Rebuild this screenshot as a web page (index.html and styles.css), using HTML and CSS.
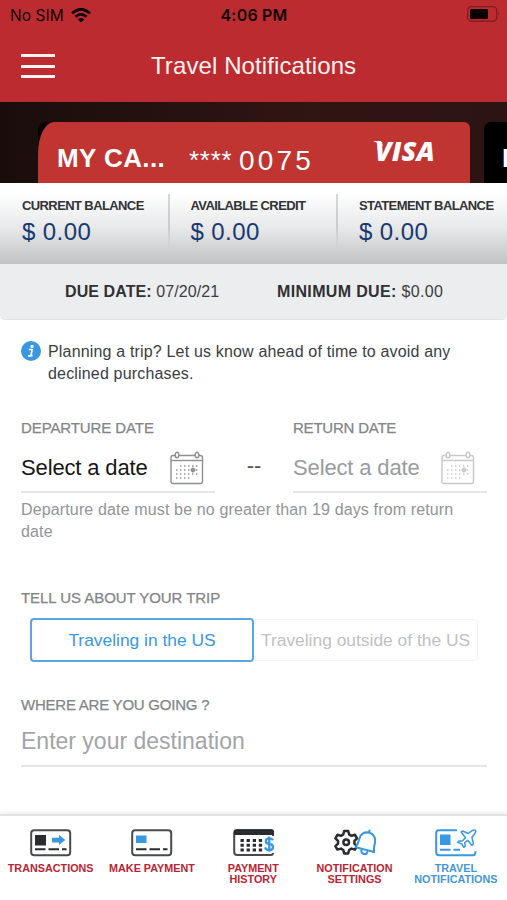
FILE: index.html
```html
<!DOCTYPE html>
<html lang="en">
<head>
<meta charset="utf-8">
<meta name="viewport" content="width=device-width, initial-scale=1">
<title>Travel Notifications</title>
<link rel="stylesheet" href="styles.css">
</head>
<body>
<svg class="defs" aria-hidden="true">
  <symbol id="calendar" viewBox="0 0 34 34">
    <g fill="none" stroke="currentColor" stroke-width="1.4">
      <rect x="1" y="4.5" width="31.5" height="28" rx="2"/>
      <path d="M1 9.5h31.5"/>
      <ellipse cx="7" cy="4" rx="1.8" ry="2.8" fill="#fff"/>
      <ellipse cx="27" cy="4" rx="1.8" ry="2.8" fill="#fff"/>
      <path d="M10 15h19M6 19h23M6 23h23M6 27h15" stroke-dasharray="1.4 2.6"/>
      <circle cx="23" cy="19" r="1.5"/>
      <path d="M23 16v6M20 19h6" stroke-width=".7"/>
    </g>
  </symbol>
</svg>
<div class="screen">
  <header class="header">
    <div class="status">
      <div class="carrier"><span>No SIM</span>
        <svg width="20" height="15" viewBox="0 0 20 15" fill="none" stroke="#120506" stroke-width="2.8"><path d="M1 5.2Q10-2.7 19 5.2M4.4 8.8q5.6-4.8 11.2 0"/><path d="M10 14.6l-3.2-3.2q3.2-2.7 6.4 0z" fill="#120506" stroke="none"/></svg>
      </div>
      <span class="time">4:06 PM</span>
      <svg class="battery" width="33" height="16" viewBox="0 0 33 16"><rect x=".7" y=".7" width="29" height="14.4" rx="3.5" fill="none" stroke="#7f1d21" stroke-width="1.3"/><rect x="3" y="3" width="18" height="10" rx="1.5"/><path d="M31.3 5.5q1.6 2.3 0 4.6z" fill="#7f1d21"/></svg>
    </div>
    <div class="titlebar">
      <div class="menu"><i></i><i></i><i></i></div>
      <h1>Travel Notifications</h1>
    </div>
  </header>

  <section class="cards">
    <div class="cardback"><div class="card">
      <b class="name">MY CA...</b><span class="stars">****</span><span class="digits">0075</span><span class="visa">VISA</span>
    </div></div>
    <div class="nextcard"><b>M</b></div>
  </section>

  <section class="balances">
    <div><b>CURRENT BALANCE</b><span>$ 0.00</span></div>
    <div><b>AVAILABLE CREDIT</b><span>$ 0.00</span></div>
    <div><b>STATEMENT BALANCE</b><span>$ 0.00</span></div>
  </section>
  <section class="due">
    <p class="duedate"><b>DUE DATE:</b> 07/20/21</p>
    <p class="minimum"><b>MINIMUM DUE:</b> $0.00</p>
  </section>

  <main>
    <div class="info">
      <svg width="20" height="20" viewBox="0 0 20 20"><circle cx="10" cy="10" r="10" fill="#3998df"/><circle cx="11" cy="5.4" r="1.6" fill="#fff"/><path d="M7.8 8.5h3.4l-1.3 6.2h1.7M7 14.9h3" fill="none" stroke="#fff" stroke-width="1.7"/></svg>
      <p>Planning a trip? Let us know ahead of time to avoid any<br>declined purchases.</p>
    </div>
    <div class="dates">
      <div class="field"><label class="label l1">DEPARTURE DATE</label><div class="pick"><span>Select a date</span><svg width="34" height="34"><use href="#calendar"/></svg></div></div>
      <span class="dash">--</span>
      <div class="field off"><label class="label l2">RETURN DATE</label><div class="pick"><span>Select a date</span><svg width="34" height="34"><use href="#calendar"/></svg></div></div>
    </div>
    <p class="hint">Departure date must be no greater than 19 days from return<br>date</p>
    <div class="label trip">TELL US ABOUT YOUR TRIP</div>
    <div class="segment"><button class="on">Traveling in the US</button><button class="other">Traveling outside of the US</button></div>
    <div class="label where">WHERE ARE YOU GOING ?</div>
    <div class="destination">Enter your destination</div>
  </main>

  <nav>
    <a><svg width="42" height="28" viewBox="0 0 42 28"><rect x="1.2" y="1.2" width="39" height="25" rx="3" fill="none" stroke="#484a4b" stroke-width="2"/><rect x="5" y="6" width="11" height="10.5" fill="#292b2c"/><path d="M22 8.7h7V5.8l6.3 5.2-6.3 5v-2.6h-7z" fill="#3998df"/><path d="M5 20.2h10.5M18.5 20.2H29M32 20.2h4.5" stroke="#292b2c" stroke-width="2"/></svg><span>TRANSACTIONS</span></a>
    <a><svg width="42" height="28" viewBox="0 0 42 28"><rect x="1.2" y="1.2" width="39" height="25" rx="3" fill="none" stroke="#484a4b" stroke-width="2"/><rect x="5" y="6.5" width="10.5" height="7.5" fill="#3998df"/><path d="M5 20.2h10.5M18.5 20.2H29M32 20.2h4.5" stroke="#292b2c" stroke-width="2"/></svg><span>MAKE PAYMENT</span></a>
    <a><svg width="42" height="28" viewBox="0 0 42 28" fill="none"><path d="M40 7V3q0-2-2-2H4Q1.2 1 1.2 4v19q0 3 3 3H38q2 0 2-2" stroke="#484a4b" stroke-width="2"/><path d="M1 6V3q0-2.5 3-2.5h34q3 0 3 2.5v3z" fill="#292b2c"/><path d="M7.5 11.5h22M7.5 16.2h22M7.5 21h22" stroke="#292b2c" stroke-width="3" stroke-dasharray="3.3 2.8"/><path d="M40 11.3q-1-2-3.5-2c-4.7 0-4.8 5.2-.3 5.6 5.2.5 5 6.2 0 6.2q-3 0-4.2-2.6M36.3 7.5v15.2" stroke="#3998df" stroke-width="2.3"/></svg><span>PAYMENT<br>HISTORY</span></a>
    <a><svg width="42" height="28" viewBox="0 0 42 28" fill="none"><path d="M10.2 2h4l.9 3.4 2.4 1.4 3.5-1 2 3.5-2.6 2.5v2.8l2.6 2.5-2 3.5-3.5-1-2.4 1.4-.9 3.4h-4l-.9-3.4-2.4-1.4-3.5 1-2-3.5L4 14.6v-2.8L1.4 9.3l2-3.5 3.5 1 2.4-1.4z" stroke="#292b2c" stroke-width="2.5" stroke-linejoin="round"/><circle cx="12.2" cy="13.2" r="2.8" stroke="#292b2c" stroke-width="2.5"/><path d="M35.5 3.7C30 2.4 26.2 5.2 25.2 10c-.8 4-1.8 6-3.6 8.3l18.6 4.6c-.6-2.7-.3-4.9.6-8.3 1.2-5.2-.8-9.8-5.3-10.9zM35 3.4l.5-1.8" fill="#fff" stroke="#3998df" stroke-width="2.1" stroke-linecap="round" stroke-linejoin="round"/><path d="M27.3 21.5c.3 4 5 5 6 1.6" stroke="#3998df" stroke-width="2.1" stroke-linecap="round"/></svg><span>NOTIFICATION<br>SETTINGS</span></a>
    <a class="active"><svg width="42" height="28" viewBox="0 0 42 28" fill="none" stroke="#3998df" stroke-width="2"><path d="M22 1.2H4q-2.8 0-2.8 3v19q0 3 3 3H38q2.5 0 2.5-4"/><rect x="5" y="5.5" width="10.5" height="10.5" fill="#3998df" stroke="none"/><path d="M5 20.7h10.5M18.5 20.7H25"/><path d="M26.2 3l1.6-1 5.4 2.5 3.6-2.6c3.4-2.1 5.2-.5 3 2.8L36.9 8.2l1.6 6.9-1.8 1.2-4-5-3 2.6.5 3.4-1.4 1-2.2-3.6-3.9-1.3 1.1-1.4 3.5.1 3.2-3.3z" fill="#fff" stroke-width="1.5" stroke-linejoin="round"/></svg><span>TRAVEL<br>NOTIFICATIONS</span></a>
  </nav>
</div>
</body>
</html>
```
FILE: styles.css
```css
* { box-sizing: border-box; }
body, h1, p { margin: 0; }
body { font-family: "Liberation Sans", Arial, sans-serif; background: #fff; color: #3b3d3f; }
.defs { position: absolute; width: 0; height: 0; }
.screen { width: 507px; height: 900px; display: flex; flex-direction: column; overflow: hidden; white-space: nowrap; }
svg { flex: none; display: block; }

.header { height: 102px; background: #bb2b30; flex: none; }
.status { height: 30px; display: grid; grid-template-columns: 1fr auto 1fr; align-items: center; padding: 0 7px 0 10px; color: #120506; font-family: Inter, sans-serif; }
.carrier { display: flex; align-items: center; gap: 7px; font-size: 15.5px; letter-spacing: .05px; }
.time { font-size: 16px; font-weight: 600; letter-spacing: .2px; margin-left: -2px; }
.battery { justify-self: end; margin-top: -3px; }
.titlebar { display: flex; height: 72px; align-items: center; }
.menu { width: 34px; height: 24px; margin: 0 96px 0 21px; display: flex; flex-direction: column; justify-content: space-between; }
.menu i { height: 3px; background: #fff2f1; }
h1 { font-size: 24px; font-weight: 400; letter-spacing: .1px; color: #fff2f1; }

.cards { height: 81px; flex: none; display: flex; align-items: flex-end; gap: 14px; padding-left: 38px; background: linear-gradient(90deg, #190d0c, #301512 60%, #2b1412); }
.cardback { width: 432px; height: 61px; background: #050202; border-radius: 8px 8px 0 0; flex: none; }
.card { height: 61px; background: #c03431; border-radius: 16px 6px 0 0 / 32px 6px 0 0; color: #fff; display: flex; align-items: flex-start; padding: 21px 0 0 19px; }
.name { width: 132px; font-size: 26px; line-height: 30px; letter-spacing: .4px; }
.stars { width: 50px; font-size: 26px; line-height: 34px; letter-spacing: .7px; }
.digits { width: 134px; font-size: 28px; line-height: 36px; letter-spacing: 3.2px; }
.visa { position: relative; font-family: "Open Sans", sans-serif; font-size: 27px; font-weight: 800; font-style: italic; line-height: 32px; margin-top: -8px; padding-left: 2px; letter-spacing: .2px; }
.visa::before { content: ""; position: absolute; left: 0; top: 6px; width: 10px; height: 5px; background: #fff; clip-path: polygon(0 0, 80% 0, 100% 100%, 55% 45%); }
.nextcard { width: 23px; height: 61px; background: #000; color: #fff; border-radius: 7px 0 0; padding: 21px 0 0 18px; font-size: 26px; line-height: 30px; overflow: hidden; flex: none; }

.balances { height: 81px; flex: none; display: grid; grid-template-columns: 168.5px 168.5px 170px; background: linear-gradient(#fff 12%, #e8e9ea 55%, #c0c2c4); }
.balances div { padding: 14px 0 0 22px; position: relative; }
.balances div + div::before { content: ""; position: absolute; left: -1px; top: 11px; width: 2px; height: 57px; background: linear-gradient(#d6d8d9, #c8cacc 60%, transparent); }
.balances b { display: block; font-size: 13px; line-height: 17px; letter-spacing: -.6px; color: #313335; }
.balances span { display: block; font-size: 24px; line-height: 35px; letter-spacing: .4px; color: #173a70; }
.due { height: 56px; flex: none; background: #ecedef; border-bottom: 1px solid #e1e2e4; border-radius: 0 0 5px 5px; display: flex; align-items: center; padding-left: 65px; font-size: 16px; }
.duedate { width: 212px; letter-spacing: .09px; }
.minimum { letter-spacing: .34px; }
.due b { color: #2f3133; }

main { padding: 21px 20px 0 21px; flex: 1; }
.info { display: flex; gap: 7px; font-size: 16px; line-height: 21.5px; letter-spacing: .17px; }
.dates { margin-top: 34px; display: flex; }
.field { width: 194px; border-bottom: 2px solid #e5e6e6; height: 75px; color: #161616; }
.label { display: block; font-size: 15px; line-height: 20px; letter-spacing: -.1px; color: #838587; -webkit-text-stroke: .25px currentColor; }
.l2 { letter-spacing: -.22px; }
.pick { display: flex; justify-content: space-between; font-size: 22px; line-height: 30px; letter-spacing: -.14px; padding: 15px 11px 0 0; }
.pick svg { margin-top: -2px; color: #8d8f91; }
.dash { width: 78px; text-align: center; padding-top: 33px; font-size: 22px; line-height: 30px; color: #555; }
.off { color: #999b9d; }
.off .pick { padding-right: 12px; }
.off .pick svg { color: #c6c8ca; }
.hint { margin-top: 6px; font-size: 16px; line-height: 21.5px; letter-spacing: .14px; color: #929496; }
.trip { margin-top: 46px; letter-spacing: -.05px; }
.segment { display: flex; margin: 10px 9px 0; height: 44px; }
.segment button { appearance: none; padding: 1px 0 0; margin: 0; width: 224px; font: 17.4px "Liberation Sans", Arial, sans-serif; background: #fff; border: 1px solid #f4f4f5; color: #bfc1c3; }
.segment .on { border: 2px solid #5ba5e2; border-radius: 4px; color: #3998df; }
.segment .other { border-left: 0; height: 42px; margin-top: 1px; border-radius: 0 4px 4px 0; }
.where { margin-top: 33px; letter-spacing: -.23px; }
.destination { font-size: 23px; line-height: 52px; height: 52px; border-bottom: 2px solid #e5e6e6; color: #a2a4a6; }

nav { height: 86px; flex: none; border-top: 2px solid #e1e2e3; box-shadow: 0 -2px 2px #f2f2f2; display: grid; grid-template-columns: repeat(5, 101.3px); padding-top: 13px; }
nav a { display: flex; flex-direction: column; align-items: center; gap: 6px; text-align: center; color: #bb2430; font-size: 10.8px; line-height: 11px; font-weight: 700; }
nav svg { margin-left: 1px; }
nav .active { color: #4597d3; }
```
